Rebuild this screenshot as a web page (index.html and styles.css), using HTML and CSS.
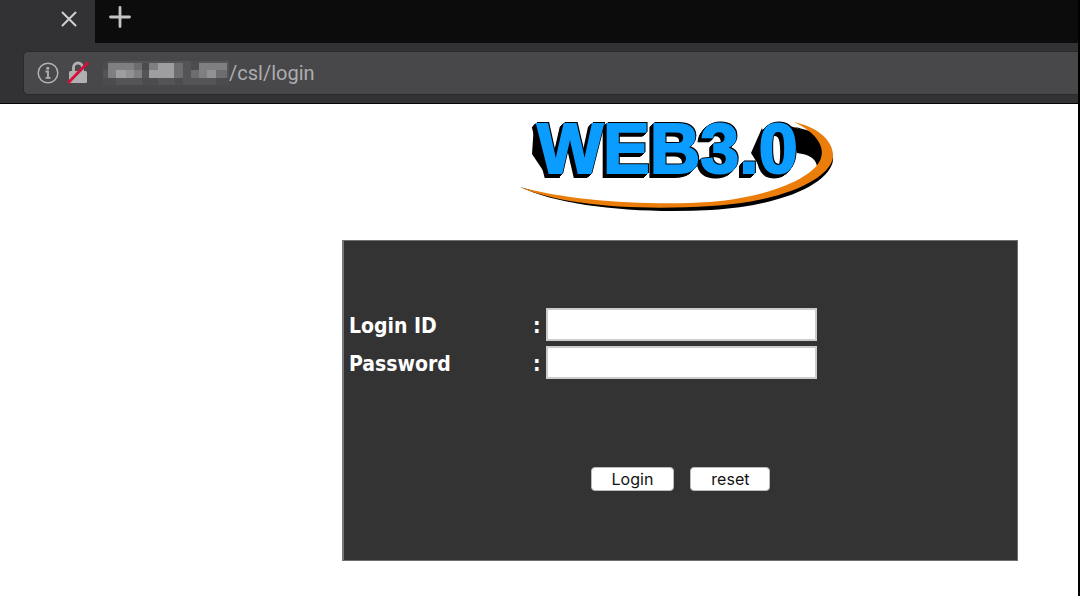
FILE: index.html
```html
<!DOCTYPE html>
<html lang="en">
<head>
<meta charset="utf-8">
<title>Login</title>
<link rel="stylesheet" href="styles.css">
</head>
<body>
<div class="window">
  <header class="chrome">
    <div class="tabs">
      <div class="tab">
        <button class="icon-button" type="button" aria-label="Close tab">
          <svg width="16" height="16" viewBox="0 0 16 16"><path d="M1.500 1.500l13 13M14.500 1.500l-13 13" stroke="#d0d0d2" stroke-width="2" stroke-linecap="round"/></svg>
        </button>
      </div>
      <button class="icon-button new-tab" type="button" aria-label="New tab">
        <svg width="22" height="22" viewBox="0 0 22 22"><path d="M11 1.500v19M1.500 11h19" stroke="#c4c4c6" stroke-width="2.800" stroke-linecap="round"/></svg>
      </button>
    </div>
    <div class="toolbar">
      <div class="address">
        <svg width="22" height="22" viewBox="0 0 22 22" fill="none" stroke="#b1b1b3"><circle cx="11" cy="11" r="9.800" stroke-width="1.500"/><path d="M8.500 9.500H11v6M8.500 15.800h5" stroke-width="1.800"/><circle cx="10.800" cy="6.300" r="1.500" fill="#b1b1b3" stroke="none"/></svg>
        <svg class="lock" width="22" height="24" viewBox="0 0 22 24"><path d="M6.500 11V6.500a4.500 4.500 0 0 1 9 0V11" fill="none" stroke="#b1b1b3" stroke-width="2.800"/><rect x="2" y="10" width="18" height="12" rx="1.500" fill="#b1b1b3"/><path d="M1 22L21 1.500" stroke="#d70f3c" stroke-width="3"/></svg>
        <svg class="mosaic" width="126" height="24" viewBox="0 0 126 24" shape-rendering="crispEdges">
          <rect width="126" height="24" fill="#545456"/>
          <path d="M5 2h34v15H5zM46 2h26v15H46zM96 2h28v15H96z" fill="#7f7f82"/>
          <path d="M13 9h10v8H13zM55 2h16v7H55zM46 9h25v8H46z" fill="#9e9ea1"/>
          <path d="M23 9h8v8h-8zM104 9h9v8h-9z" fill="#919194"/>
          <path d="M31 2h8v7h-8zM71 2h9v15h-9zM88 9h8v8h-8zM113 9h11v8h-11z" fill="#6d6d70"/>
          <path d="M0 0h5v9H0zM39 2h7v7h-7zM88 0h8v9h-8zM0 17h13v7H0zM39 17h16v7H39zM72 17h8v7h-8zM113 17h13v7h-13z" fill="#4c4c4e"/>
        </svg>
        <span class="url">/csl/login</span>
      </div>
    </div>
  </header>
  <main class="page">
    <div class="content">
      <svg class="logo" width="328" height="108" viewBox="516 106 328 108" role="img" aria-label="WEB3.0">
        <path d="M794 127C819 131 834 145 833 160C831 180 791 205 711 210C636 214 560 206 520 187C570 203 650 209 710 204C777 198 817 179 824 160C828 146 817 136 794 127Z" fill="#000"/>
        <path d="M790 126Q828 137 825 153Q823 160 817 166Q815 155 797 153Z" fill="#000"/>
        <path d="M794 122C821 128 834 143 833 157C831 176 791 201 711 206C636 211 560 205 520 187C570 201 650 206 710 202C777 196 816 175 821 158C825 145 815 132 794 122Z" fill="#eb7d0b"/>
        <path d="M534 124L532 154L548 178H560L552 140ZM762 128L751 153L766 177L772 160Z" fill="#000"/>
        <text class="logo-face" x="537" y="173">WEB3.0</text>
      </svg>
      <form class="panel">
        <div class="fields">
          <label for="login">Login ID</label><span class="colon">:</span><input id="login" type="text">
          <label for="password">Password</label><span class="colon">:</span><input id="password" type="password">
        </div>
        <div class="actions">
          <button class="action" type="submit">Login</button>
          <button class="action" type="reset">reset</button>
        </div>
      </form>
    </div>
  </main>
</div>
</body>
</html>
```
FILE: styles.css
```css
* { box-sizing: border-box; }
body { margin: 0; background: #fff; }
.window { min-height: 100vh; border-right: 2px solid #000; }
.chrome { background: #323234; border-bottom: 1px solid #050505; }
.tabs { display: flex; height: 43px; background: #0c0c0d; }
.tab { width: 95px; padding: 11px 18px 0 0; background: #323234; display: flex; justify-content: flex-end; align-items: flex-start; }
.icon-button { display: block; padding: 0; border: 0; background: none; }
.icon-button svg { display: block; }
.new-tab { margin: 6px 0 0 14px; align-self: flex-start; }
.toolbar { padding: 8px 0 8px 23px; }
.address { display: flex; align-items: center; height: 44px; padding-left: 13px; background: #48484a; border: 1px solid #2a2a2c; border-right: 0; border-radius: 5px 0 0 5px; }
.lock { margin-left: 8px; }
.mosaic { margin-left: 14px; }
.url { font: 20px "Roboto", sans-serif; color: #adadb0; }
.page { padding: 2px 60px 36px 342px; }
.content { display: flex; flex-direction: column; align-items: center; }
.logo { display: block; }
.logo-face {
  font: bold 70px "Liberation Sans", sans-serif;
  fill: #0a9cff;
  stroke: #0a9cff;
  stroke-width: 2px;
  filter: drop-shadow(1px -1px 0 #000) drop-shadow(-1px 1px 0 #000) drop-shadow(-1px 1px 0 #000) drop-shadow(-1px 1px 0 #000) drop-shadow(-1px 1px 0 #000);
}
.panel { width: 100%; margin: 26px 0 0; padding: 67px 5px 69px 5px; background: #333; border: 1px solid #6b7072; border-left: 2px solid #777; }
.fields { display: grid; grid-template-columns: 181px 10px 271px; column-gap: 3px; row-gap: 5px; align-items: center; }
.fields label, .colon { padding-top: 2px; font: bold 21px "DejaVu Sans Condensed", "DejaVu Sans", sans-serif; color: #fff; }
.fields input { width: 100%; height: 33px; padding: 2px 6px; border: 2px solid #ccc; border-radius: 0; background: #fff; font: 20px "Liberation Sans", sans-serif; }
.actions { display: flex; justify-content: center; gap: 16px; margin-top: 88px; }
.action { height: 24px; padding: 0 20px; border: 1px solid #bbb; border-radius: 4px; background: #fff; color: #111; font: 16px "Inter", sans-serif; line-height: 20px; }
```
